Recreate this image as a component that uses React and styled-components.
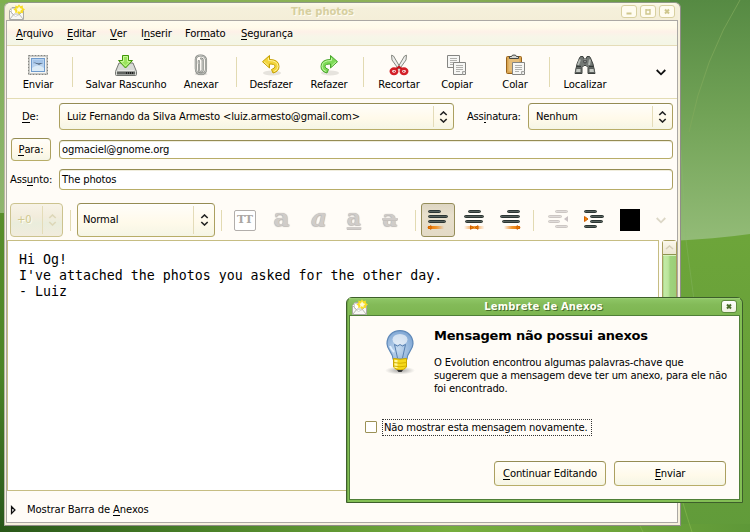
import React from "react";
import styled, { createGlobalStyle, css } from "styled-components";

const Global = createGlobalStyle`
  * { box-sizing: border-box; }
  html, body { margin: 0; padding: 0; overflow: hidden; }
  body { width: 750px; height: 532px; font: 10px/13px "DejaVu Sans", sans-serif; color: #000; }
  u { text-decoration: none; box-shadow: 0 1px 0 #000; display: inline-block; line-height: 11px; }
  svg { display: block; flex: none; }
`;

const Desktop = styled.main`
  position: relative;
  width: 750px;
  height: 532px;
  overflow: hidden;
  background: #6da43c;
`;
const Backdrop = styled.svg`
  position: absolute;
  inset: 0;
`;

const Label = styled.span`
  white-space: pre;
  letter-spacing: ${(p) => p.$ls ?? -0.15}px;
  line-height: 13px;
`;

/* ---------- main window ---------- */
const Window = styled.section`
  position: absolute;
  left: 4px;
  top: 2px;
  width: 677px;
  height: 524px;
  padding: 0 2px 2px 1px;
  border: 1px solid #98988f;
  border-color: #8f9788 #908d88 #908d88 #b9b6aa;
  border-radius: 6px 6px 0 0;
  background: #f6f0dc;
  display: flex;
  flex-direction: column;
`;
const TitleBar = styled.header`
  height: 17px;
  flex: none;
  display: flex;
  align-items: center;
  background: linear-gradient(#fdfae9, #f5f0db 30%, #f4eed8);
  border-radius: 5px 5px 0 0;
`;
const TitleIcon = styled.div`
  width: 24px;
  padding-left: ${(p) => p.$pad || 1}px;
`;
const Title = styled.h1`
  flex: 1;
  margin: 0;
  text-align: center;
  font-size: 10px;
  line-height: 15px;
  letter-spacing: ${(p) => p.$ls || 0}px;
  padding-right: ${(p) => p.$shift || 0}px;
  color: ${(p) => p.$color};
  text-shadow: 1px 1px 0 ${(p) => p.$shadow};
`;
const TitleButtons = styled.div`
  display: flex;
  gap: 3px;
  padding-right: ${(p) => p.$pad || 0}px;
`;
const TitleButton = styled.button`
  width: 16px;
  height: 13px;
  padding: 0;
  display: grid;
  place-items: center;
  border: 1px solid ${(p) => (p.$active ? "#5d8a3c" : "#d8d0a0")};
  border-radius: 3px;
  background: ${(p) => (p.$active ? "linear-gradient(#ffffff, #eef0df)" : "#fffcf0")};
`;
const Content = styled.div`
  flex: 1;
  min-height: 0;
  display: flex;
  flex-direction: column;
  border: 1px solid #aba8a4;
  background: #fffcf7;
`;
const MenuBar = styled.nav`
  height: 25px;
  flex: none;
  display: flex;
  align-items: center;
  padding-left: 9px;
  border-bottom: 1px solid #e5dcb8;
  background: linear-gradient(#fffcef 0, #fffaea 28%, #fdf1e8 45%, #f7f6e8 65%, #f4f6e6);
`;
const MenuItem = styled.div`
  width: ${(p) => p.$w}px;
`;
const ToolBar = styled.div`
  height: 53px;
  flex: none;
  display: flex;
  border-bottom: 1px solid #e3dcb4;
`;
const Tool = styled.div`
  width: ${(p) => p.$w}px;
  display: flex;
  flex-direction: column;
  align-items: center;
  padding-top: 8px;
  gap: 2px;
`;
const Slot = styled.div`
  width: ${(p) => p.$w}px;
  display: flex;
  justify-content: center;
  align-items: center;
`;
const Rule = styled.i`
  width: 1px;
  height: ${(p) => p.$h}px;
  background: #e2dab2;
`;
const Overflow = styled.div`
  flex: 1;
  display: flex;
  justify-content: flex-end;
  align-items: center;
  padding-right: 11px;
`;

const FieldRow = styled.div`
  display: flex;
  align-items: center;
  height: ${(p) => p.$h}px;
  margin-top: ${(p) => p.$mt}px;
  padding-right: 4px;
  flex: none;
`;
const FieldLabel = styled.div`
  width: ${(p) => p.$w}px;
  padding-left: ${(p) => p.$pl}px;
  flex: none;
`;
const edge = css`
  border: 1px solid;
  border-color: #958c53 #aca060 #b8ad68 #aca060;
  border-radius: 4px;
`;
const raised = css`
  ${edge}
  background: linear-gradient(#fffefa, #fffbef 40%, #fffaea 58%, #f5f5e5);
`;
const Combo = styled.div`
  ${raised}
  width: ${(p) => p.$w}px;
  height: ${(p) => p.$h}px;
  padding-left: ${(p) => p.$pl || 7}px;
  display: flex;
  align-items: center;
  justify-content: space-between;
  box-shadow: inset 0 1px 0 #fff;
  ${(p) => p.$disabled && css`
    border-color: #ccc38f;
    color: #d0c88f;
    background: linear-gradient(#f7f3e7, #f2ecdc 40%, #eaeddc 60%, #f1ecdd);
    text-shadow: 1px 1px 0 #fffdf0;
    box-shadow: none;
  `}
`;
const ComboText = styled(Label)`
  margin-top: ${(p) => p.$up || 0}px;
`;
const ComboEnd = styled.div`
  width: ${(p) => p.$w || 20}px;
  height: calc(100% - 4px);
  border-left: 1px solid #e4dcb8;
  display: grid;
  place-items: center;
`;
const Entry = styled.div`
  ${edge}
  flex: 1;
  height: ${(p) => p.$h}px;
  display: flex;
  align-items: center;
  padding-left: 2px;
  background: #fff;
  box-shadow: inset 0 1px 0 #f0eddd;
`;
const Button = styled.button`
  ${raised}
  width: ${(p) => p.$w}px;
  height: ${(p) => p.$h}px;
  padding: 0;
  font: inherit;
  color: #000;
  display: flex;
  align-items: center;
  justify-content: center;
`;
const FormatBar = styled.div`
  height: 50px;
  flex: none;
  display: flex;
  align-items: center;
  padding: 10px 0 0 3px;
`;
const Pressed = styled.div`
  width: 34px;
  height: 34px;
  display: grid;
  place-items: center;
  border: 1px solid #958d59;
  border-radius: 3px;
  background: linear-gradient(#ddd5c2, #e8e0cc 35%, #e3dac6);
`;
const Swatch = styled.div`
  width: 20px;
  height: 22px;
  background: #000;
`;
const EditorArea = styled.div`
  height: 251px;
  flex: none;
  display: flex;
  justify-content: space-between;
`;
const Editor = styled.div`
  width: 652px;
  border: 1px solid #c6bd83;
  background: #fff;
  padding: 11px 0 0 11px;
  font: 13.27px/16px "DejaVu Sans Mono", monospace;
  white-space: pre;
`;
const ScrollBar = styled.div`
  width: 15px;
  border: 1px solid #a79d5d;
  border-radius: 3px;
  background: #efe9d6;
`;
const ScrollUp = styled.div`
  height: 13px;
  display: grid;
  place-items: center;
  background: linear-gradient(#fbf8ec, #ece6d2);
`;
const Thumb = styled.div`
  height: 150px;
  border: 1px solid #8d9350;
  border-width: 1px 0;
  background: linear-gradient(90deg, #a3d183 0, #c3eaa5 12%, #bbe59b 40%, #9fd37d 55%, #9bce78);
  box-shadow: inset 0 1px 0 #d6f2bf;
`;
const AttachmentBar = styled.div`
  flex: 1;
  display: flex;
  align-items: center;
  gap: 10px;
  padding: 6px 0 0 3px;
`;

/* ---------- dialog ---------- */
const Dialog = styled.section`
  position: absolute;
  left: 346px;
  top: 297px;
  width: 397px;
  height: 206px;
  padding: 0 2px 2px;
  border: 1px solid #3d5f2b;
  border-radius: 6px 6px 0 0;
  background: #83bf55;
  box-shadow: inset 1px 0 0 #6fa548, inset 0 1px 0 #a2d27c;
  display: flex;
  flex-direction: column;
`;
const DialogTitle = styled.header`
  height: 17px;
  flex: none;
  display: flex;
  align-items: center;
  background: linear-gradient(#a0d079, #8cc463 10%, #83ba58 40%, #7db650);
`;
const DialogBody = styled.div`
  flex: 1;
  border: 1px solid #4f7f37;
  background: #fffcf7;
  display: flex;
  flex-direction: column;
  padding: 11px 13px 13px 15px;
`;
const Message = styled.div`
  display: flex;
  height: 85px;
`;
const Bulb = styled.div`
  width: 69px;
  flex: none;
  width: 69px;
  padding: 3px 0 0 19px;
`;
const Copy = styled.div`
  display: flex;
  flex-direction: column;
`;
const Heading = styled.h2`
  margin: 1px 0 12px;
  font-size: 13px;
  line-height: 16px;
  white-space: pre;
  letter-spacing: -0.2px;
`;
const CheckRow = styled.div`
  display: flex;
  align-items: center;
  gap: 5px;
  margin-top: 6px;
  height: 18px;
`;
const CheckBox = styled.span`
  width: 12px;
  height: 12px;
  border: 1px solid #9b9156;
  border-radius: 1px;
  background: #fff;
`;
const Focused = styled.span`
  width: 210px;
  height: 17px;
  padding: 1px 0 0 1px;
  border: 1px dotted #333;
`;
const Actions = styled.footer`
  display: flex;
  justify-content: flex-end;
  gap: 8px;
  margin-top: auto;
`;

/* ---------- drawings ---------- */
const Wallpaper = () => (
  <Backdrop width="750" height="532" viewBox="0 0 750 532">
    <defs>
      <linearGradient id="top" x1="0" x2="1"><stop offset="0" stopColor="#7fb04d" /><stop offset=".55" stopColor="#8fb259" /><stop offset=".8" stopColor="#6f9e47" /><stop offset="1" stopColor="#578b43" /></linearGradient>
      <linearGradient id="sky" x2="0" y2="1"><stop offset="0" stopColor="#568a43" /><stop offset=".45" stopColor="#71a256" /><stop offset="1" stopColor="#95bd79" /></linearGradient>
      <linearGradient id="leftSky" x2="0" y2="1"><stop offset="0" stopColor="#7fae55" /><stop offset="1" stopColor="#8fb56f" /></linearGradient>
      <linearGradient id="leftLow" x2="0" y2="1"><stop offset="0" stopColor="#598e2c" /><stop offset=".5" stopColor="#4c8426" /><stop offset="1" stopColor="#28561b" /></linearGradient>
      <linearGradient id="low" x2="0" y2="1"><stop offset="0" stopColor="#6da53a" /><stop offset=".5" stopColor="#68a039" /><stop offset="1" stopColor="#619b3a" /></linearGradient>
      <linearGradient id="floor"><stop offset="0" stopColor="#295719" /><stop offset=".25" stopColor="#477d27" /><stop offset=".6" stopColor="#76ad3e" /><stop offset=".85" stopColor="#6ca33a" /><stop offset="1" stopColor="#5e9838" /></linearGradient>
    </defs>
    <rect width="750" height="20" fill="url(#top)" />
    <rect y="3" width="20" height="212" fill="url(#leftSky)" />
    <rect y="213" width="20" height="319" fill="url(#leftLow)" />
    <rect x="670" width="80" height="250" fill="url(#sky)" />
    <path d="M670 241 Q715 239 750 234 V532 H670Z" fill="url(#low)" />
    <rect y="524" width="750" height="8" fill="url(#floor)" />
    <path d="M740 0Q704 58 689 132" fill="none" stroke="#82aa5b" strokeWidth="1" opacity=".7" />
    <path d="M681 150 L686 240 L694 300" fill="none" stroke="#8dba70" opacity=".35" />
    <path d="M639 524l4 8M683 503Q687 517 692 532" fill="none" stroke="#8bbd52" opacity=".6" />
  </Backdrop>
);

const Envelope = () => (
  <svg width="17" height="16" viewBox="0 0 17 16">
    <path d="M1.500 6.500L4 3.500h9l2.500 3v9h-14z" fill="#f8f8f5" stroke="#aaaaa5" />
    <path d="M3.500 4.500h8v6l-4 2-4-3z" fill="#fff" stroke="#d3d3d0" />
    <path d="M2 15l4-5h5l4 5M2 7l4 4M15 7l-4 4" fill="none" stroke="#b8b8b2" />
    <path d="M11 .3l1.400 2 2.400-.8.1 2.600 2.100 1.400-2.100 1.400.1 2.400-2.500-.5L11 10.500l-1.500-1.900-2.300.5.1-2.400-2-1.300 2.100-1.400-.1-2.400 2.300.6z" fill="#f8dd24" />
    <path d="M11 2.300l1.200 2 2.200.8-1.700 1.200-.4 2-1.400-1-1.900.6.4-2-1.300-1.200 2-.5z" fill="#fffbd8" />
  </svg>
);
const UpDown = ({ color = "#222" }) => (
  <svg width="9" height="12" viewBox="0 0 9 12" fill="none" stroke={color} strokeWidth="1.600"><path d="M1.300 4L4.500 1l3.200 3M1.300 8L4.500 11l3.200-3" /></svg>
);
const Chevron = ({ color = "#111", w = 10 }) => (
  <svg width={w} height="7" viewBox="0 0 10 7" fill="none" stroke={color} strokeWidth="1.800"><path d="M.7 1L5 5.300 9.300 1" /></svg>
);
const Stamp = () => (
  <svg width="22" height="22" viewBox="0 0 22 22">
    <rect x="1.500" y="1.500" width="19" height="19" fill="#f2f2f0" stroke="#858581" strokeDasharray="2 1" />
    <rect x="2.500" y="2.500" width="17" height="17" fill="#f6f6f4" stroke="#c9c9c6" />
    <rect x="4.500" y="4.500" width="13" height="13" fill="#b8d2ee" stroke="#6f9bcd" />
    <path d="M5 14q6-5 12 0v3H5z" fill="#dcebf6" />
    <path d="M6 6h10v4H6z" fill="#9bbee6" opacity=".7" />
    <path d="M6 8l5 1.500 5-.5-4 1.800-2-.8z" fill="#405266" />
  </svg>
);
const Save = () => (
  <svg width="22" height="22" viewBox="0 0 22 22">
    <path d="M4 9h14l3.500 8.500v3q0 1-1 1h-19q-1 0-1-1v-3z" fill="#d8dad6" stroke="#747672" />
    <path d="M2 17.500h18v3H2z" fill="#60635f" /><path d="M3 16.500h16" stroke="#e8e8e5" /><path d="M11 19h8" stroke="#222" strokeWidth="2" strokeDasharray="1 1" />
    <path d="M7.500 1.500h6v5h4L10.500 14 3.500 6.500h4z" fill="#9be35c" stroke="#419509" /><path d="M8.500 2.500h4v5h2.500L10.500 12 6 7.500h2.500z" fill="none" stroke="#c9fa98" />
  </svg>
);
const Clip = () => (
  <svg width="14" height="22" viewBox="0 0 14 22" fill="none" strokeLinecap="round">
    <ellipse cx="7" cy="20" rx="6.500" ry="1.500" fill="#dedcd7" />
    <path d="M5 9v7q0 2 1.800 2t1.900-2V6.500Q8.700 4.500 7 4.500M1.800 15V5.500Q1.800 1.500 6.500 1.500T12 5.500V15q0 5-5 5t-5-4.500M4.800 9.500V7" stroke="#80827d" strokeWidth="2.100" />
    <path d="M5 9v7q0 2 1.800 2t1.900-2V6.500Q8.700 4.500 7 4.500M1.800 15V5.500Q1.800 1.500 6.500 1.500T12 5.500V15q0 5-5 5t-5-4.500M4.800 9.500V7" stroke="#d6d8d3" strokeWidth=".8" />
  </svg>
);
const Turn = ({ redo }) => (
  <svg width="22" height="22" viewBox="0 0 22 22">
    <ellipse cx="12" cy="19" rx="9" ry="2.500" fill="#e6e3dd" />
    <g transform={redo ? "translate(22 0) scale(-1 1)" : undefined}>
      <path d="M9.500 1.500v4q9.500 0 9.500 7 0 5-6 6.500l-1.500-3.500q3.500-1 3.500-3.300 0-2.200-5.500-2.200v4L2.500 7.700z" fill={redo ? "#7edb57" : "#f3d53d"} stroke={redo ? "#48a52b" : "#c5a000"} />
      <path d="M8.500 4v2.500q9.500 0 9.500 6 0 3.500-4 5M8 11.500L4 7.800" fill="none" stroke={redo ? "#c3f5a7" : "#fff09a"} />
    </g>
  </svg>
);
const Scissors = () => (
  <svg width="20" height="22" viewBox="0 0 20 22">
    <path d="M2.500 1.200L4.500 2l7 12-2 1L3 6zM17.500 1.200L15.500 2l-7 12 2 1L17 6z" fill="#eeeeec" stroke="#858780" />
    <ellipse cx="5" cy="17.300" rx="3.200" ry="2.700" fill="#fff" stroke="#d31f27" strokeWidth="2.600" /><ellipse cx="15" cy="17.300" rx="3.200" ry="2.700" fill="#fff" stroke="#d31f27" strokeWidth="2.600" />
    <path d="M7 14.800l3-1.800 3 1.800" fill="none" stroke="#c5161e" strokeWidth="2" />
    <path d="M4.500 17.300h1.500M14 17.300h1.500" stroke="#b50d14" />
  </svg>
);
const Sheet = ({ x, y }) => (
  <g transform={`translate(${x} ${y})`}><path d="M.5.500h12v12h-12z" fill="#f7f7f5" stroke="#858582" /><path d="M3 3.500h7M3 5.500h7M3 7.500h7M3 9.500h4" stroke="#b0b0ad" /><path d="M9.500 12.500v-3h3" fill="#ddd" stroke="#a5a5a2" /></g>
);
const CopyIcon = () => <svg width="20" height="22" viewBox="0 0 20 22"><Sheet x="0" y="1" /><Sheet x="6" y="8" /></svg>;
const Paste = () => (
  <svg width="20" height="22" viewBox="0 0 20 22">
    <rect x="1.500" y="2.500" width="15" height="17" rx="1" fill="#d9a450" stroke="#98631c" />
    <path d="M3.500 4.500h11v13h-11z" fill="#e6bd78" />
    <path d="M4.500 4.500v-2h2q0-1.500 2.500-1.500t2.500 1.500h2v2z" fill="#d5d7d3" stroke="#464844" />
    <Sheet x="7" y="8" />
  </svg>
);
const Binoculars = () => (
  <svg width="24" height="22" viewBox="0 0 24 22">
    <path d="M6.500 4l1-1.500h2.500l1 2.500h2l1-2.500h2.500l1 1.500 2.500 6 2 9.500h-7v-6l-2-2h-2l-2 2v6h-7l2-9.500z" fill="#747975" stroke="#3c403d" />
    <path d="M7 5.500L5 11M17 5.500l-1 5.500M12 5v3" stroke="#b3b8b3" strokeWidth="2" />
    <path d="M3 14.500h5v4H2.500zM16 14.500h5l.5 4H16z" fill="#c5c9c3" stroke="#5a5e5b" />
    <path d="M4 12.500h4M16 12.500h4" stroke="#333836" strokeWidth="1.500" />
    <circle cx="12" cy="7.500" r="1.500" fill="#8a8e8b" stroke="#444" />
  </svg>
);
const Letter = styled.span`
  width: 24px;
  text-align: center;
  font: 700 25px/22px "DejaVu Serif", serif;
  font-style: ${(p) => (p.$italic ? "italic" : "normal")};
  color: #d0ccc9;
  text-shadow: 0 0 1px #a5a19d, 0 1px 1px #c5c1bd;
  margin-top: ${(p) => p.$top || -4}px;
`;
const LetterLine = styled(Letter)`
  font-size: ${(p) => p.$size}px;
  text-decoration: ${(p) => p.$deco};
  text-decoration-thickness: 2px;
  text-underline-offset: 2px;
`;
const Teletype = styled.span`
  width: 22px;
  height: 21px;
  border: 1px solid #b2aeab;
  border-radius: 2px;
  background: #fff;
  display: grid;
  place-items: center;
  font: 700 11px/12px "DejaVu Serif", serif;
  color: #aaa6a3;
`;
const Align = ({ kind }) => {
  const x = kind === "left" ? [0, 0, 0] : kind === "right" ? [7, 0, 2] : [4, 0, 1];
  const w = [13, 20, 18];
  const id = "fade-" + kind;
  return (
    <svg width="22" height="22" viewBox="0 0 22 22">
      <defs>
        <linearGradient id={id}>
          <stop offset="0" stopColor="#ed7200" stopOpacity={kind === "left" ? 1 : 0} />
          <stop offset=".5" stopColor="#f18b16" stopOpacity=".9" />
          <stop offset="1" stopColor="#ed7200" stopOpacity={kind === "right" ? 1 : 0} />
        </linearGradient>
      </defs>
      {x.map((v, i) => <rect key={i} x={v + 1.5} y={1.5 + i * 5} width={w[i] - 1} height="2" rx="1" fill="#58625e" stroke="#2b3532" />)}
      <rect x={kind === "right" ? 5 : 1} y="17" width={kind === "center" ? 20.500 : 16} height="3" fill={`url(#${id})`} />
      {kind === "left" && <path d="M.8 18.500l3.200-1.800v3.600z" fill="#ef9000" stroke="#ce5c00" />}
      {kind === "right" && <path d="M21.200 18.500l-3.200-1.800v3.600z" fill="#ef9000" stroke="#ce5c00" />}
      {kind === "center" && <path d="M10.500 18.500l-3-1.800v3.600zM12 18.500l3-1.800v3.600z" fill="#ef9000" stroke="#ce5c00" />}
    </svg>
  );
};
const Indent = ({ off }) => {
  const bars = off ? [[7, 12], [0, 13], [0, 11], [7, 12]] : [[0, 12], [6, 13], [6, 12], [0, 12]];
  return (
    <svg width="20" height="20" viewBox="0 0 20 20">
      {bars.map(([x, w], i) => <rect key={i} x={x + 0.5} y={0.5 + i * 5} width={w} height="2" rx="1" fill={off ? "#e0dcda" : "#58625e"} stroke={off ? "#ccc6c3" : "#2b3532"} />)}
      {off ? <path d="M20 6v6l-4-3z" fill="#c9c1c3" /> : <path d="M.5 6.500v5l3.500-2.500z" fill="#f68800" stroke="#ce5c00" />}
    </svg>
  );
};
const BulbIcon = () => (
  <svg width="32" height="45" viewBox="0 0 32 45">
    <defs>
      <radialGradient id="glass" cx=".42" cy=".65" r=".7"><stop offset="0" stopColor="#c7dbf0" /><stop offset=".6" stopColor="#98b9de" /><stop offset="1" stopColor="#7ba3d2" /></radialGradient>
      <radialGradient id="shade"><stop offset="0" stopColor="#777" stopOpacity=".7" /><stop offset="1" stopColor="#888" stopOpacity="0" /></radialGradient>
    </defs>
    <ellipse cx="16" cy="40.500" rx="15" ry="4" fill="url(#shade)" />
    <path d="M16 .7c8 0 13 5.800 13 13 0 6.300-6 8.500-6 15.300H9C9 22.200 3 20 3 13.700 3 6.500 8 .7 16 .7z" fill="url(#glass)" stroke="#5e88b8" strokeWidth="1.200" />
    <ellipse cx="16" cy="9.500" rx="7.500" ry="5.500" fill="#fff" opacity=".6" />
    <path d="M13.500 28l-3-13.500 3 1.500 2.500-1.500 2.500 1.500 3-1.500-3 13.500" fill="none" stroke="#5880b0" />
    <path d="M6 16q1 3 4 6" fill="none" stroke="#dfefff" strokeWidth="2" />
    <path d="M9.500 28.500q6.500 1.500 13 0V37q-2 3-6.500 3t-6.500-3z" fill="#f6d91b" stroke="#c9a400" />
    <path d="M12 30v8" stroke="#fff7a0" strokeWidth="3" /><path d="M9.500 32.500q6.500 1.500 13 0M9.500 36q6.500 1.500 13 0" fill="none" stroke="#d5b100" />
    <path d="M13 40h6l-1.500 2h-3z" fill="#333" />
  </svg>
);
const Glyph = ({ kind, color = "#cfc78e" }) => (
  <svg width="8" height="7" viewBox="0 0 8 7" stroke={color} fill="none" strokeWidth="2">
    {kind === "min" && <path d="M1.500 5.500h5" />}
    {kind === "max" && <path d="M1.500 2h5M2 1v5h4V1" strokeWidth="1.400" />}
    {kind === "close" && <path d="M2 1.500l4 4M6 1.500l-4 4" />}
  </svg>
);

/* ---------- data ---------- */
const menu = [
  [51, <><u>A</u>rquivo</>], [43, <><u>E</u>ditar</>], [31, <><u>V</u>er</>],
  [44, <>I<u>n</u>serir</>], [56, <>For<u>m</u>ato</>], [70, <><u>S</u>egurança</>],
];
const tools = [
  [62, "Enviar", <Stamp />], [7], [100, "Salvar Rascunho", <Save />], [50, "Anexar", <Clip />], [20],
  [50, "Desfazer", <Turn />], [66, "Refazer", <Turn redo />], [3], [68, "Recortar", <Scissors />],
  [48, "Copiar", <CopyIcon />], [68, "Colar", <Paste />], [1], [70, "Localizar", <Binoculars />],
];

export default function App() {
  return (
    <Desktop>
      <Global />
      <Wallpaper />
      <Window>
        <TitleBar>
          <TitleIcon $pad={2}><Envelope /></TitleIcon>
          <Title $color="#d6cf9f" $shadow="#fffdf2" $shift={6}>The photos</Title>
          <TitleButtons $pad={3}>
            <TitleButton><Glyph kind="min" /></TitleButton>
            <TitleButton><Glyph kind="max" /></TitleButton>
            <TitleButton><Glyph kind="close" /></TitleButton>
          </TitleButtons>
        </TitleBar>
        <Content>
          <MenuBar>
            {menu.map(([w, t], i) => <MenuItem key={i} $w={w}><Label>{t}</Label></MenuItem>)}
          </MenuBar>
          <ToolBar>
            {tools.map(([w, t, icon], i) => t
              ? <Tool key={i} $w={w}>{icon}<Label>{t}</Label></Tool>
              : <Slot key={i} $w={w}><Rule $h={30} /></Slot>)}
            <Overflow><Chevron /></Overflow>
          </ToolBar>
          <FieldRow $h={27} $mt={4}>
            <FieldLabel $w={52} $pl={15}><Label><u>D</u>e:</Label></FieldLabel>
            <Combo $w={395} $h={27}>
              <Label>{"Luiz Fernando da Silva Armesto <luiz.armesto@gmail.com>"}</Label>
              <ComboEnd><UpDown /></ComboEnd>
            </Combo>
            <FieldLabel $w={74} $pl={13}><Label $ls={-0.25}>Ass<u>i</u>natura:</Label></FieldLabel>
            <Combo $w={145} $h={27}><Label>Nenhum</Label><ComboEnd><UpDown /></ComboEnd></Combo>
          </FieldRow>
          <FieldRow $h={23} $mt={8}>
            <FieldLabel $w={52} $pl={4}><Button $w={40} $h={23}><Label><u>P</u>ara:</Label></Button></FieldLabel>
            <Entry $h={19}><Label>ogmaciel@gnome.org</Label></Entry>
          </FieldRow>
          <FieldRow $h={21} $mt={8}>
            <FieldLabel $w={52} $pl={3}><Label>Ass<u>u</u>nto:</Label></FieldLabel>
            <Entry $h={21}><Label>The photos</Label></Entry>
          </FieldRow>
          <FormatBar>
            <Combo $w={53} $h={34} $pl={6} $disabled><ComboText $up={-1}>+0</ComboText><ComboEnd><UpDown color="#ddd7b8" /></ComboEnd></Combo>
            <Slot $w={14}><Rule $h={21} /></Slot>
            <Combo $w={138} $h={34} $pl={5}><ComboText $up={-1}>Normal</ComboText><ComboEnd $w={21}><UpDown /></ComboEnd></Combo>
            <Slot $w={13}><Rule $h={21} /></Slot>
            <Slot $w={34}><Teletype>TT</Teletype></Slot>
            <Slot $w={39}><Letter>a</Letter></Slot>
            <Slot $w={36}><Letter $italic>a</Letter></Slot>
            <Slot $w={34}><LetterLine $size={22} $top={-7} $deco="underline">a</LetterLine></Slot>
            <Slot $w={38}><LetterLine $size={23} $deco="line-through">a</LetterLine></Slot>
            <Slot $w={12}><Rule $h={21} /></Slot>
            <Pressed><Align kind="left" /></Pressed>
            <Slot $w={38}><Align kind="center" /></Slot>
            <Slot $w={34}><Align kind="right" /></Slot>
            <Slot $w={12}><Rule $h={21} /></Slot>
            <Slot $w={38}><Indent off /></Slot>
            <Slot $w={34}><Indent /></Slot>
            <Slot $w={38}><Swatch /></Slot>
            <Slot $w={24}><Chevron color="#dcd7c6" /></Slot>
          </FormatBar>
          <EditorArea>
            <Editor>{"Hi Og!\nI've attached the photos you asked for the other day.\n- Luiz"}</Editor>
            <ScrollBar>
              <ScrollUp><svg width="9" height="5" viewBox="0 0 9 5" fill="none" stroke="#d6cfb8" strokeWidth="1.500"><path d="M1 4l3.500-3L8 4" /></svg></ScrollUp>
              <Thumb />
            </ScrollBar>
          </EditorArea>
          <AttachmentBar>
            <svg width="7" height="10" viewBox="0 0 7 10"><path d="M1.500 1.500v7L5 5z" fill="#ddd" stroke="#111" strokeWidth="1.200" /></svg>
            <Label $ls={-0.08}>Mostrar Barra de <u>A</u>nexos</Label>
          </AttachmentBar>
        </Content>
      </Window>

      <Dialog>
        <DialogTitle>
          <TitleIcon $pad={2}><Envelope /></TitleIcon>
          <Title $color="#fffff5" $shadow="#456d29" $ls={0.15} $shift={7}>Lembrete de Anexos</Title>
          <TitleButtons $pad={3}>
            <TitleButton $active><Glyph kind="close" color="#496c2a" /></TitleButton>
          </TitleButtons>
        </DialogTitle>
        <DialogBody>
          <Message>
            <Bulb><BulbIcon /></Bulb>
            <Copy>
              <Heading>Mensagem não possui anexos</Heading>
              <Label $ls={-0.2}>O Evolution encontrou algumas palavras-chave que</Label>
              <Label>sugerem que a mensagem deve ter um anexo, para ele não</Label>
              <Label>foi encontrado.</Label>
            </Copy>
          </Message>
          <CheckRow><CheckBox /><Focused><Label>Não mostrar esta mensagem novamente.</Label></Focused></CheckRow>
          <Actions>
            <Button $w={112} $h={25}><Label><u>C</u>ontinuar Editando</Label></Button>
            <Button $w={112} $h={25}><Label><u>E</u>nviar</Label></Button>
          </Actions>
        </DialogBody>
      </Dialog>
    </Desktop>
  );
}
